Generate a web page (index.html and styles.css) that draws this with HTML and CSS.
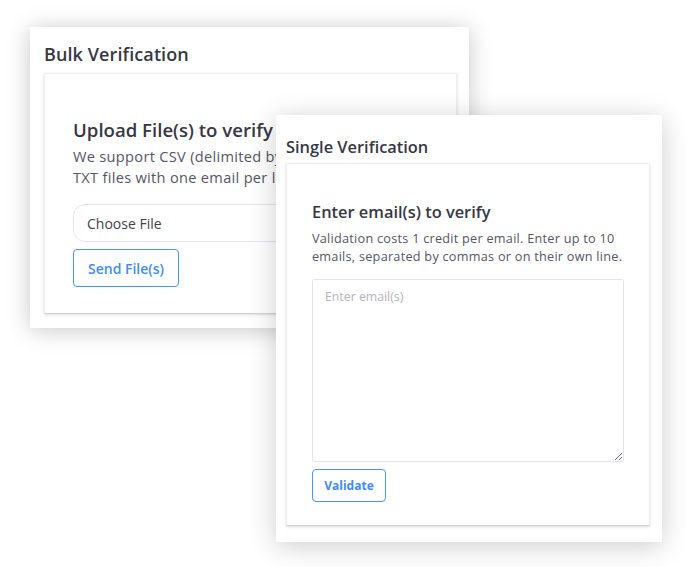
FILE: index.html
```html
<!DOCTYPE html>
<html>
<head>
<meta charset="utf-8">
<link rel="stylesheet" href="styles.css">
</head>
<body>
<div class="stage">
  <section class="window window-bulk">
    <h2 class="window-title">Bulk Verification</h2>
    <div class="card card-bulk">
      <h3 class="card-title">Upload File(s) to verify</h3>
      <p class="card-desc">We support CSV (delimited by commas) and<br>TXT files with one email per line.</p>
      <div class="file-input">Choose File</div>
      <button class="btn btn-send">Send File(s)</button>
    </div>
  </section>
  <section class="window window-single">
    <h2 class="window-title small">Single Verification</h2>
    <div class="card card-single">
      <h3 class="card-title small">Enter email(s) to verify</h3>
      <p class="card-desc small">Validation costs 1 credit per email. Enter up to 10<br>emails, separated by commas or on their own line.</p>
      <textarea class="emails" placeholder="Enter email(s)"></textarea>
      <button class="btn btn-validate">Validate</button>
    </div>
  </section>
</div>
</body>
</html>
```

FILE: styles.css
```css
* { box-sizing: border-box; }
html, body { margin: 0; padding: 0; background: #ffffff; }
body { font-family: "Open Sans", "Noto Sans", sans-serif; color: #3a3a48; }

.stage {
  position: relative;
  width: 687px;
  height: 567px;
  overflow: hidden;
}

.window {
  position: absolute;
  background: #ffffff;
  display: flex;
  flex-direction: column;
}
.window-bulk {
  left: 30px; top: 27px; width: 439px; height: 301px;
  padding: 17px 12px 14px 14px;
  box-shadow: 0 2px 22px rgba(0,0,0,0.22);
}
.window-single {
  left: 276px; top: 115px; width: 386px; height: 427px;
  padding: 23px 12px 16px 10px;
  box-shadow: 0 4px 26px rgba(0,0,0,0.2);
}

.window-title {
  margin: 0 0 9px 0;
  font-size: 18px;
  font-weight: 600;
  line-height: 20px;
  letter-spacing: 0.1px;
  color: #373744;
}
.window-title.small { font-size: 16.4px; line-height: 18px; margin-bottom: 7px; letter-spacing: 0; }

.card {
  flex: 1;
  background: #fff;
  border: 1px solid #efeff3;
  border-bottom-color: #d0d0d6;
  box-shadow: 0 1px 3px rgba(0,0,0,0.14);
  display: flex;
  flex-direction: column;
  align-items: flex-start;
}
.card-bulk { padding: 44px 20px 0 28px; }
.card-single { padding: 38px 25px 0 25px; }

.card-title {
  margin: 0;
  font-size: 18.6px;
  font-weight: 600;
  line-height: 24px;
  color: #373744;
}
.card-title.small { font-size: 16.4px; line-height: 20px; }

.card-desc {
  margin: 4px 0 0 0;
  font-size: 14.6px;
  line-height: 21px;
  letter-spacing: 0.3px;
  color: #555563;
  white-space: nowrap;
}
.card-desc.small { font-size: 12.7px; line-height: 18px; margin-top: 7px; letter-spacing: 0.25px; color: #555563; }

.file-input {
  margin-top: 16px;
  width: 360px;
  height: 38px;
  border: 1px solid #e4e4ee;
  border-radius: 12px;
  padding: 0 13px;
  display: flex;
  align-items: center;
  font-size: 14px;
  color: #3f3f4c;
}

.btn {
  background: #fff;
  border: 1px solid #4a94f4;
  border-radius: 4px;
  color: #3f8cf4;
  font-family: inherit;
  font-weight: 600;
  cursor: pointer;
}
.btn-send {
  margin-top: 7px;
  width: 106px;
  height: 38px;
  font-size: 14px;
}
.btn-validate {
  margin-top: 7px;
  width: 74px;
  height: 33px;
  font-size: 12px;
  font-weight: 700;
}

.emails {
  margin-top: 14px;
  width: 312px;
  height: 183px;
  border: 1px solid #e2e3ee;
  border-radius: 3px;
  padding: 8px 12px;
  font-family: inherit;
  font-size: 12.3px;
  color: #3f3f4c;
  resize: vertical;
}
.emails::placeholder { color: #b3b3bd; }
```
